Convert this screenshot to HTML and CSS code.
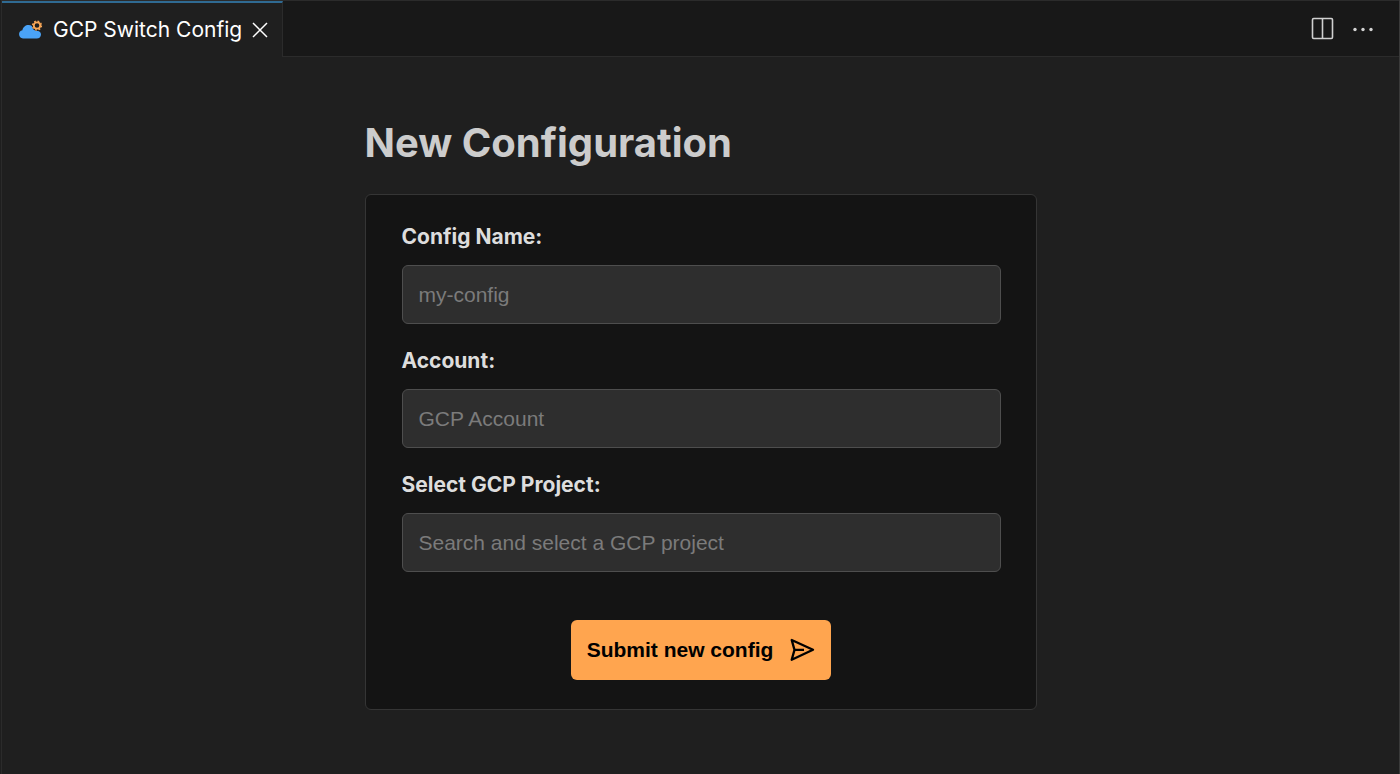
FILE: index.html
```html
<!DOCTYPE html>
<html lang="en">
<head>
<meta charset="utf-8">
<title>GCP Switch Config</title>
<link rel="stylesheet" href="styles.css">
</head>
<body>
<div class="editor">
  <header class="tab-bar">
    <div class="tab">
      <svg class="tab-icon" viewBox="0 0 24 20" aria-hidden="true">
        <path d="M5 18.500a4.200 4.200 0 0 1-.6-8.300C5 7 7.600 5 10.500 5c2.600 0 4.600 1.400 5.500 3.800.8 1.600 2.200 2.200 4.100 2.100 1.800.2 2.900 1.700 2.900 3.500 0 2.300-1.800 4.100-4.200 4.100z" fill="#4aa3f7"/>
        <circle cx="19" cy="5.500" r="5.200" fill="#1f1f1f"/>
        <circle cx="19" cy="5.500" r="3.200" fill="none" stroke="#f9a858" stroke-width="1.800"/>
        <circle cx="19" cy="5.500" r="4.500" fill="none" stroke="#f9a858" stroke-width="1.300" stroke-dasharray="1.800 1.734"/>
      </svg>
      <span class="tab-title">GCP Switch Config</span>
      <button class="icon-button" type="button" aria-label="Close tab">
        <svg class="close-icon" viewBox="0 0 16 16" aria-hidden="true"><path d="M1 1l14 14M15 1L1 15" fill="none" stroke="#fff" stroke-width="1.500"/></svg>
      </button>
    </div>
    <div class="tab-actions">
      <button class="icon-button" type="button" aria-label="Split editor">
        <svg class="action-icon" viewBox="0 0 24 24" aria-hidden="true"><path d="M3.700 1.500h17.600q1.200 0 1.200 1.200v17.600q0 1.200-1.200 1.200H3.700q-1.200 0-1.200-1.200V2.700q0-1.200 1.200-1.200zM12.500 1.500v20" fill="none" stroke="#d0d0d0" stroke-width="1.600"/></svg>
      </button>
      <button class="icon-button" type="button" aria-label="More actions">
        <svg class="action-icon" viewBox="0 0 24 24" aria-hidden="true"><g fill="#d4d4d4"><circle cx="4" cy="12.500" r="1.700"/><circle cx="12" cy="12.500" r="1.700"/><circle cx="20" cy="12.500" r="1.700"/></g></svg>
      </button>
    </div>
  </header>
  <main class="content">
    <h1 class="title">New Configuration</h1>
    <form class="card">
      <div class="field">
        <label class="label" for="name">Config Name:</label>
        <input class="input" id="name" type="text" placeholder="my-config">
      </div>
      <div class="field">
        <label class="label" for="account">Account:</label>
        <input class="input" id="account" type="text" placeholder="GCP Account">
      </div>
      <div class="field">
        <label class="label" for="project">Select GCP Project:</label>
        <input class="input" id="project" type="text" placeholder="Search and select a GCP project">
      </div>
      <button class="submit" type="button">
        <span>Submit new config</span>
        <svg class="send-icon" viewBox="0 0 26 26" aria-hidden="true"><path d="M2.700 3L24 12.700 2.700 22.800 5.500 12.900zM5.500 12.900H15" fill="none" stroke="#000" stroke-width="2.300" stroke-linejoin="round"/></svg>
      </button>
    </form>
  </main>
</div>
</body>
</html>
```
FILE: styles.css
```css
* {
  box-sizing: border-box;
}

body {
  margin: 0;
  background: #1f1f1f;
  color: #cccccc;
  font-family: Inter, "Liberation Sans", sans-serif;
}

.editor {
  min-height: 100vh;
  margin-left: 1px;
  border-left: 1px solid #2b2b2b;
  border-right: 1px solid #3a3a3a;
}

.tab-bar {
  display: flex;
  justify-content: space-between;
  height: 57px;
  background: #181818;
  border-top: 1px solid #2b2b2b;
  box-shadow: inset 0 -1px #2b2b2b;
}

.tab {
  display: flex;
  align-items: center;
  padding: 0 14px 0 16px;
  background: #1f1f1f;
  border-top: 2px solid #2f6a92;
  border-right: 1px solid #2b2b2b;
  color: #ffffff;
}

.tab-icon {
  width: 24px;
  height: 20px;
  margin-right: 11px;
  overflow: visible;
}

.tab-title {
  margin-right: 10px;
  font-size: 21px;
  line-height: 28px;
  white-space: nowrap;
}

.icon-button {
  display: flex;
  padding: 0;
  background: none;
  border: 0;
}

.close-icon {
  width: 16px;
  height: 16px;
}

.tab-actions {
  display: flex;
  align-items: center;
  gap: 17px;
  padding-right: 24px;
}

.action-icon {
  width: 24px;
  height: 24px;
}

.content {
  max-width: 672px;
  margin: 0 auto;
  padding: 60px 0;
}

.title {
  margin: 0 0 25px;
  font-size: 40px;
  line-height: 52px;
  font-weight: 700;
}

.card {
  display: flex;
  flex-direction: column;
  gap: 24px;
  padding: 29px 35px 29px 36px;
  background: #141414;
  border: 1px solid #353535;
  border-radius: 6px;
}

.field {
  display: flex;
  flex-direction: column;
  gap: 15px;
}

.label {
  color: #dddddd;
  font-size: 21px;
  line-height: 26px;
  font-weight: 700;
}

.input {
  height: 59px;
  padding: 0 16px;
  background: #2e2e2e;
  border: 1px solid #4e4e4e;
  border-radius: 6px;
  color: #dddddd;
  font-family: "Liberation Sans", Arial, sans-serif;
  font-size: 21px;
}

.input::placeholder {
  color: #7b7b7b;
}

.submit {
  display: flex;
  align-items: center;
  align-self: center;
  gap: 16px;
  height: 60px;
  margin-top: 24px;
  padding: 0 16px;
  background: #ffa54f;
  border: 0;
  border-radius: 6px;
  color: #000000;
  font-family: "Liberation Sans", Arial, sans-serif;
  font-size: 21px;
  font-weight: 700;
  white-space: nowrap;
}

.send-icon {
  width: 26px;
  height: 26px;
}
```
